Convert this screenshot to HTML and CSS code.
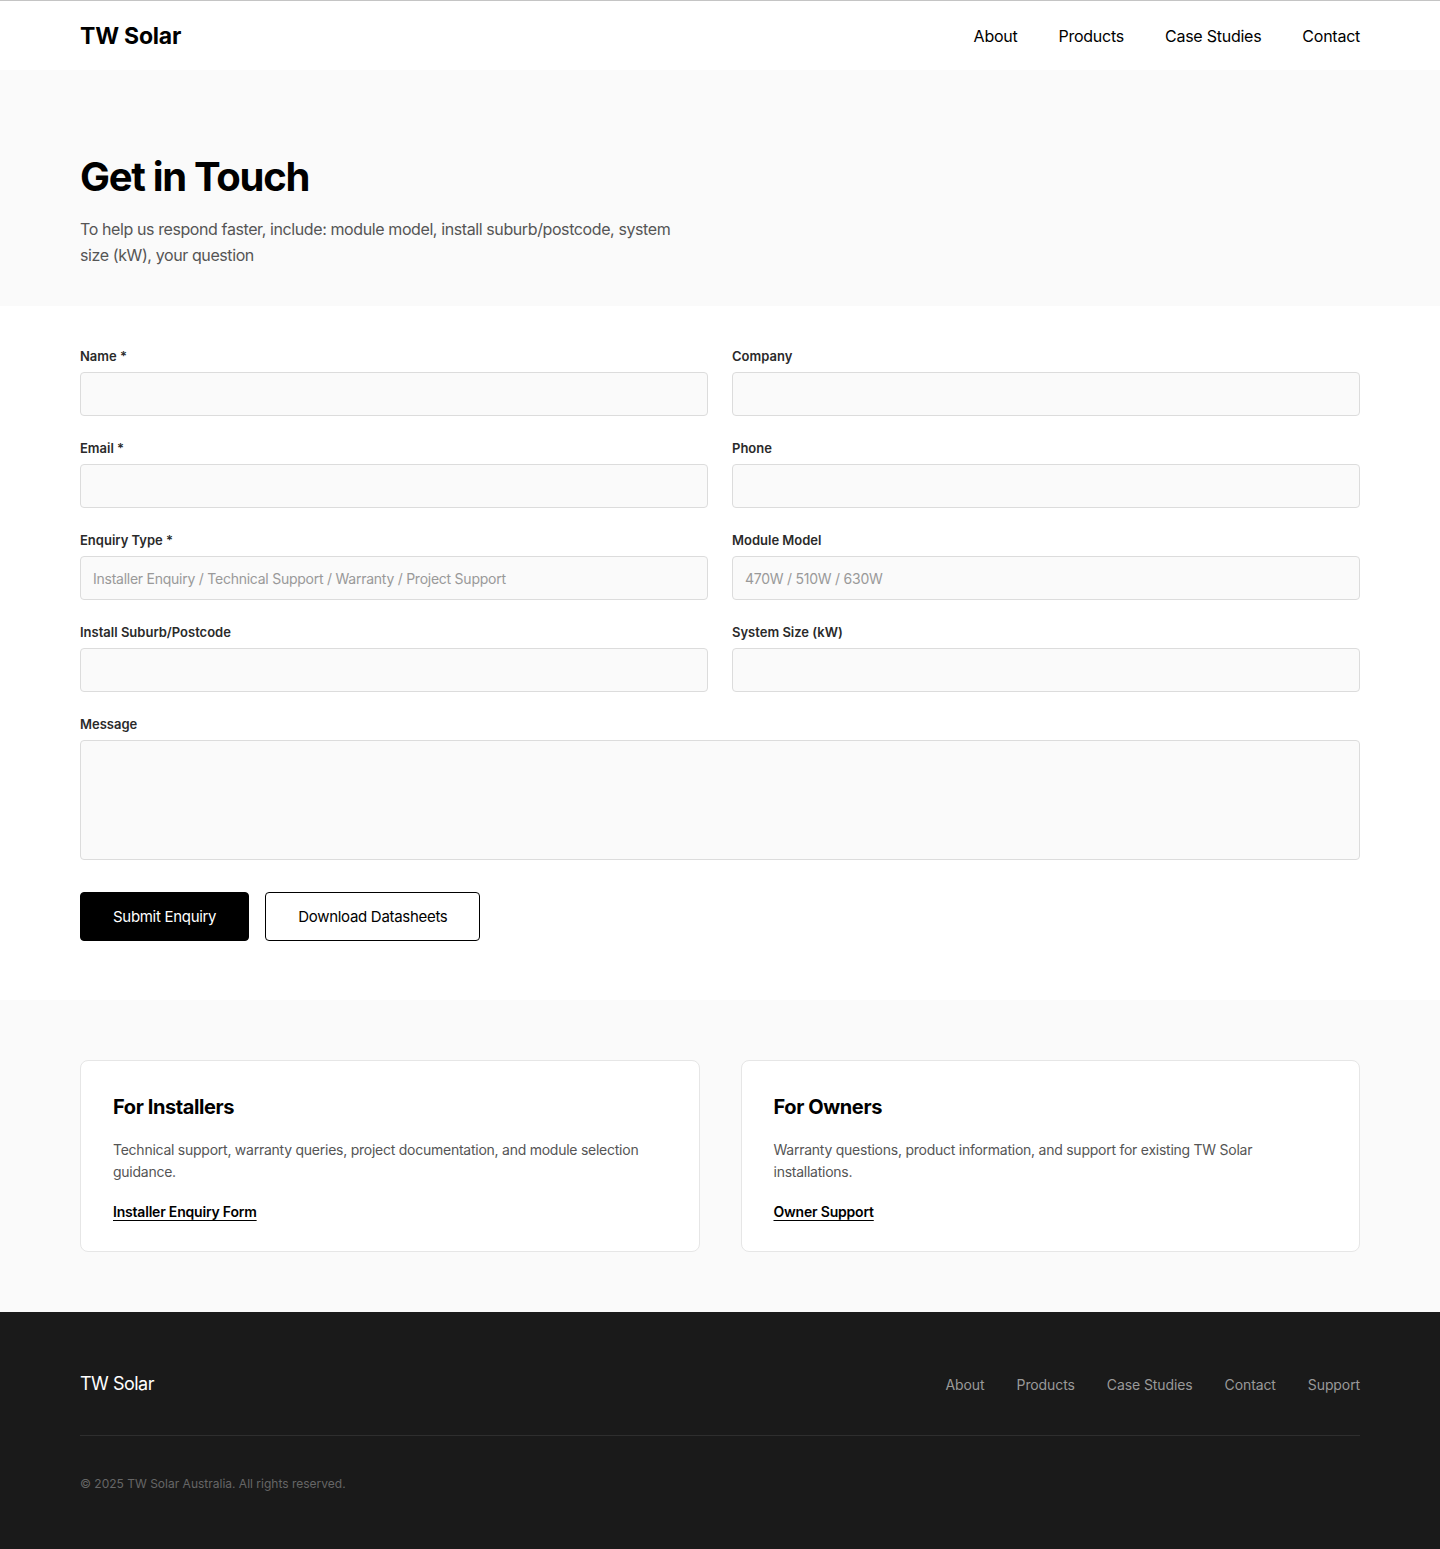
FILE: index.html
```html
<!DOCTYPE html>
<html lang="en">
<head>
<meta charset="utf-8">
<title>Contact - TW Solar</title>
<link rel="stylesheet" href="styles.css">
</head>
<body>
<header class="site-header">
  <div class="container header-inner">
    <a class="logo" href="#">TW Solar</a>
    <nav class="nav">
      <a href="#">About</a>
      <a href="#">Products</a>
      <a href="#">Case Studies</a>
      <a href="#">Contact</a>
    </nav>
  </div>
</header>

<section class="hero">
  <div class="container">
    <h1 class="hero-title">Get in Touch</h1>
    <p class="hero-text">To help us respond faster, include: module model, install suburb/postcode, system size (kW), your question</p>
  </div>
</section>

<section class="form-section">
  <div class="container">
    <form class="form">
      <div class="grid">
        <div class="field">
          <label class="label">Name *</label>
          <input class="input" type="text">
        </div>
        <div class="field">
          <label class="label">Company</label>
          <input class="input" type="text">
        </div>
        <div class="field">
          <label class="label">Email *</label>
          <input class="input" type="email">
        </div>
        <div class="field">
          <label class="label">Phone</label>
          <input class="input" type="tel">
        </div>
        <div class="field">
          <label class="label">Enquiry Type *</label>
          <input class="input" type="text" placeholder="Installer Enquiry / Technical Support / Warranty / Project Support">
        </div>
        <div class="field">
          <label class="label">Module Model</label>
          <input class="input" type="text" placeholder="470W / 510W / 630W">
        </div>
        <div class="field">
          <label class="label">Install Suburb/Postcode</label>
          <input class="input" type="text">
        </div>
        <div class="field">
          <label class="label">System Size (kW)</label>
          <input class="input" type="text">
        </div>
        <div class="field full">
          <label class="label">Message</label>
          <textarea class="input textarea"></textarea>
        </div>
      </div>
      <div class="actions">
        <button type="button" class="btn btn-primary">Submit Enquiry</button>
        <button type="button" class="btn btn-outline">Download Datasheets</button>
      </div>
    </form>
  </div>
</section>

<section class="cards-section">
  <div class="container cards">
    <div class="card">
      <h3 class="card-title">For Installers</h3>
      <p class="card-text">Technical support, warranty queries, project documentation, and module selection guidance.</p>
      <a class="card-link" href="#">Installer Enquiry Form</a>
    </div>
    <div class="card">
      <h3 class="card-title">For Owners</h3>
      <p class="card-text">Warranty questions, product information, and support for existing TW Solar installations.</p>
      <a class="card-link" href="#">Owner Support</a>
    </div>
  </div>
</section>

<footer class="footer">
  <div class="container">
    <div class="footer-top">
      <div class="footer-logo">TW Solar</div>
      <nav class="footer-nav">
        <a href="#">About</a>
        <a href="#">Products</a>
        <a href="#">Case Studies</a>
        <a href="#">Contact</a>
        <a href="#">Support</a>
      </nav>
    </div>
    <div class="footer-bottom">© 2025 TW Solar Australia. All rights reserved.</div>
  </div>
</footer>
</body>
</html>
```

FILE: styles.css
```css
* { box-sizing: border-box; }
html, body { margin: 0; padding: 0; }
body {
  font-family: Inter, "Noto Sans", "Liberation Sans", sans-serif;
  color: #000;
  background: #fff;
}
a { color: inherit; text-decoration: none; }

.container {
  width: 1280px;
  margin: 0 auto;
}

/* Header */
.site-header {
  border-top: 1px solid #c4c4c4;
  background: #fff;
}
.header-inner {
  height: 69px;
  display: flex;
  align-items: center;
  justify-content: space-between;
}
.logo {
  font-size: 23px;
  font-weight: 700;
  letter-spacing: -0.2px;
}
.nav {
  display: flex;
  gap: 41px;
}
.nav a {
  font-size: 16px;
  color: #000;
  letter-spacing: -0.25px;
}

/* Hero */
.hero {
  background: #fafafa;
  padding: 83px 0 38px;
}
.hero-title {
  margin: 0 0 15px;
  font-size: 40px;
  line-height: 48px;
  font-weight: 700;
  letter-spacing: -1.3px;
}
.hero-text {
  margin: 0;
  max-width: 610px;
  font-size: 16px;
  line-height: 26px;
  color: #555;
  letter-spacing: -0.4px;
}

/* Form */
.form-section {
  padding: 42px 0 59px;
}
.grid {
  display: grid;
  grid-template-columns: 1fr 1fr;
  column-gap: 24px;
  row-gap: 24px;
}
.field { display: flex; flex-direction: column; }
.field.full { grid-column: 1 / -1; }
.label {
  font-size: 13px;
  line-height: 16px;
  font-weight: 600;
  color: #2a2a2a;
  margin-bottom: 8px;
}
.input {
  height: 44px;
  padding: 0 12px;
  font-family: inherit;
  font-size: 14px;
  letter-spacing: -0.25px;
  color: #222;
  background: #fafafa;
  border: 1px solid #dcdcdc;
  border-radius: 4px;
  outline: none;
}
.input::placeholder { color: #999; }
.textarea {
  height: 120px;
  padding: 12px;
  resize: none;
}
.actions {
  display: flex;
  gap: 16px;
  margin-top: 32px;
}
.btn {
  height: 49px;
  padding: 0 32px;
  font-family: inherit;
  font-size: 15px;
  letter-spacing: -0.3px;
  border-radius: 4px;
  cursor: pointer;
}
.btn-primary {
  background: #000;
  color: #fff;
  border: 1px solid #000;
}
.btn-outline {
  background: #fff;
  color: #000;
  border: 1px solid #000;
}

/* Cards */
.cards-section {
  background: #fafafa;
  padding: 60px 0;
}
.cards {
  display: grid;
  grid-template-columns: 1fr 1fr;
  gap: 41px;
}
.card {
  background: #fff;
  border: 1px solid #e6e6e6;
  border-radius: 8px;
  padding: 32px 32px 28px;
}
.card-title {
  margin: 0 0 18px;
  font-size: 20px;
  line-height: 28px;
  font-weight: 700;
  letter-spacing: -0.4px;
}
.card-text {
  margin: 0 0 18px;
  font-size: 14px;
  line-height: 22px;
  color: #555;
  letter-spacing: -0.25px;
}
.card-link {
  font-size: 14px;
  line-height: 22px;
  font-weight: 600;
  letter-spacing: -0.2px;
  text-decoration: underline;
  text-underline-offset: 3px;
}

/* Footer */
.footer {
  background: #1a1a1a;
  padding: 61px 0 57px;
}
.footer-top {
  display: flex;
  justify-content: space-between;
  align-items: center;
  padding-bottom: 40px;
  border-bottom: 1px solid #2e2e2e;
}
.footer-logo {
  font-size: 18px;
  line-height: 22px;
  color: #fff;
  letter-spacing: -0.5px;
}
.footer-nav {
  display: flex;
  gap: 32px;
}
.footer-nav a {
  font-size: 14px;
  color: #999;
  letter-spacing: -0.1px;
}
.footer-bottom {
  padding-top: 39px;
  font-size: 12px;
  line-height: 18px;
  color: #666;
}
```
